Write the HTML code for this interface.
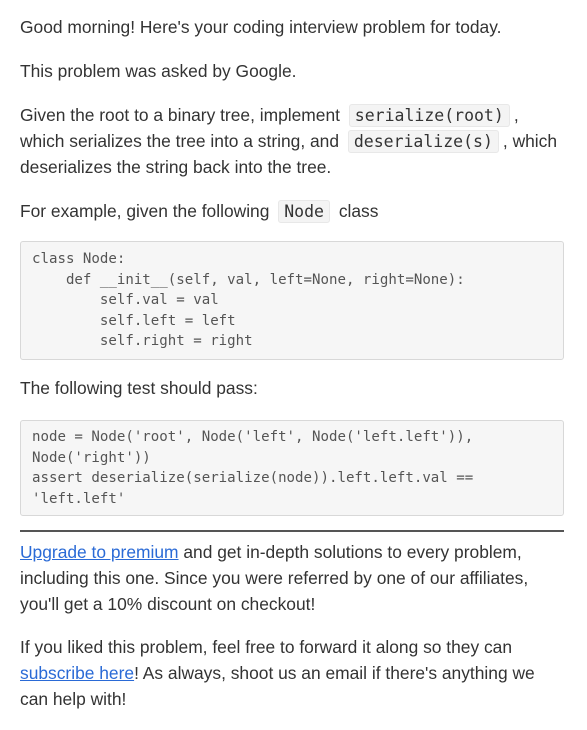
<!DOCTYPE html>
<html><head><meta charset="utf-8"><style>
body{margin:0;padding:14px 23px 0 20px;background:#fff;color:#333;font-family:"Liberation Sans",sans-serif;font-size:17.4px;line-height:26px;width:544px;}
p{margin:0 0 18px}
code{font-family:"DejaVu Sans Mono",monospace;font-size:16.5px;line-height:1;background:#f4f4f4;border:1px solid #e8e8e8;border-radius:3px;padding:1px 5px;margin:0 4px;color:#333}
pre{margin:0 0 15px;padding:7px 11px;border:1px solid #d8d8d8;border-radius:3px;background:#f6f6f6;font-family:"DejaVu Sans Mono",monospace;font-size:14.1px;line-height:20.6px;color:#555;white-space:pre}
a{color:#2a6ad6;text-decoration:underline}
hr{border:0;border-top:2px solid #555;margin:14px 0 7px}
</style></head><body>
<p>Good morning! Here's your coding interview problem for today.</p>
<p>This problem was asked by Google.</p>
<p>Given the root to a binary tree, implement <code>serialize(root)</code>, which serializes the tree into a string, and <code>deserialize(s)</code>, which deserializes the string back into the tree.</p>
<p style="margin-bottom:17px">For example, given the following <code>Node</code> class</p>
<pre>class Node:
    def __init__(self, val, left=None, right=None):
        self.val = val
        self.left = left
        self.right = right</pre>
<p style="margin-bottom:19px">The following test should pass:</p>
<pre style="margin:0;padding-top:6px;padding-bottom:6px">node = Node('root', Node('left', Node('left.left')),
Node('right'))
assert deserialize(serialize(node)).left.left.val ==
'left.left'</pre>
<hr>
<p style="margin-bottom:17px"><a>Upgrade to premium</a> and get in-depth solutions to every problem, including this one. Since you were referred by one of our affiliates, you'll get a 10% discount on checkout!</p>
<p>If you liked this problem, feel free to forward it along so they can <a>subscribe here</a>! As always, shoot us an email if there's anything we can help with!</p>
</body></html>
